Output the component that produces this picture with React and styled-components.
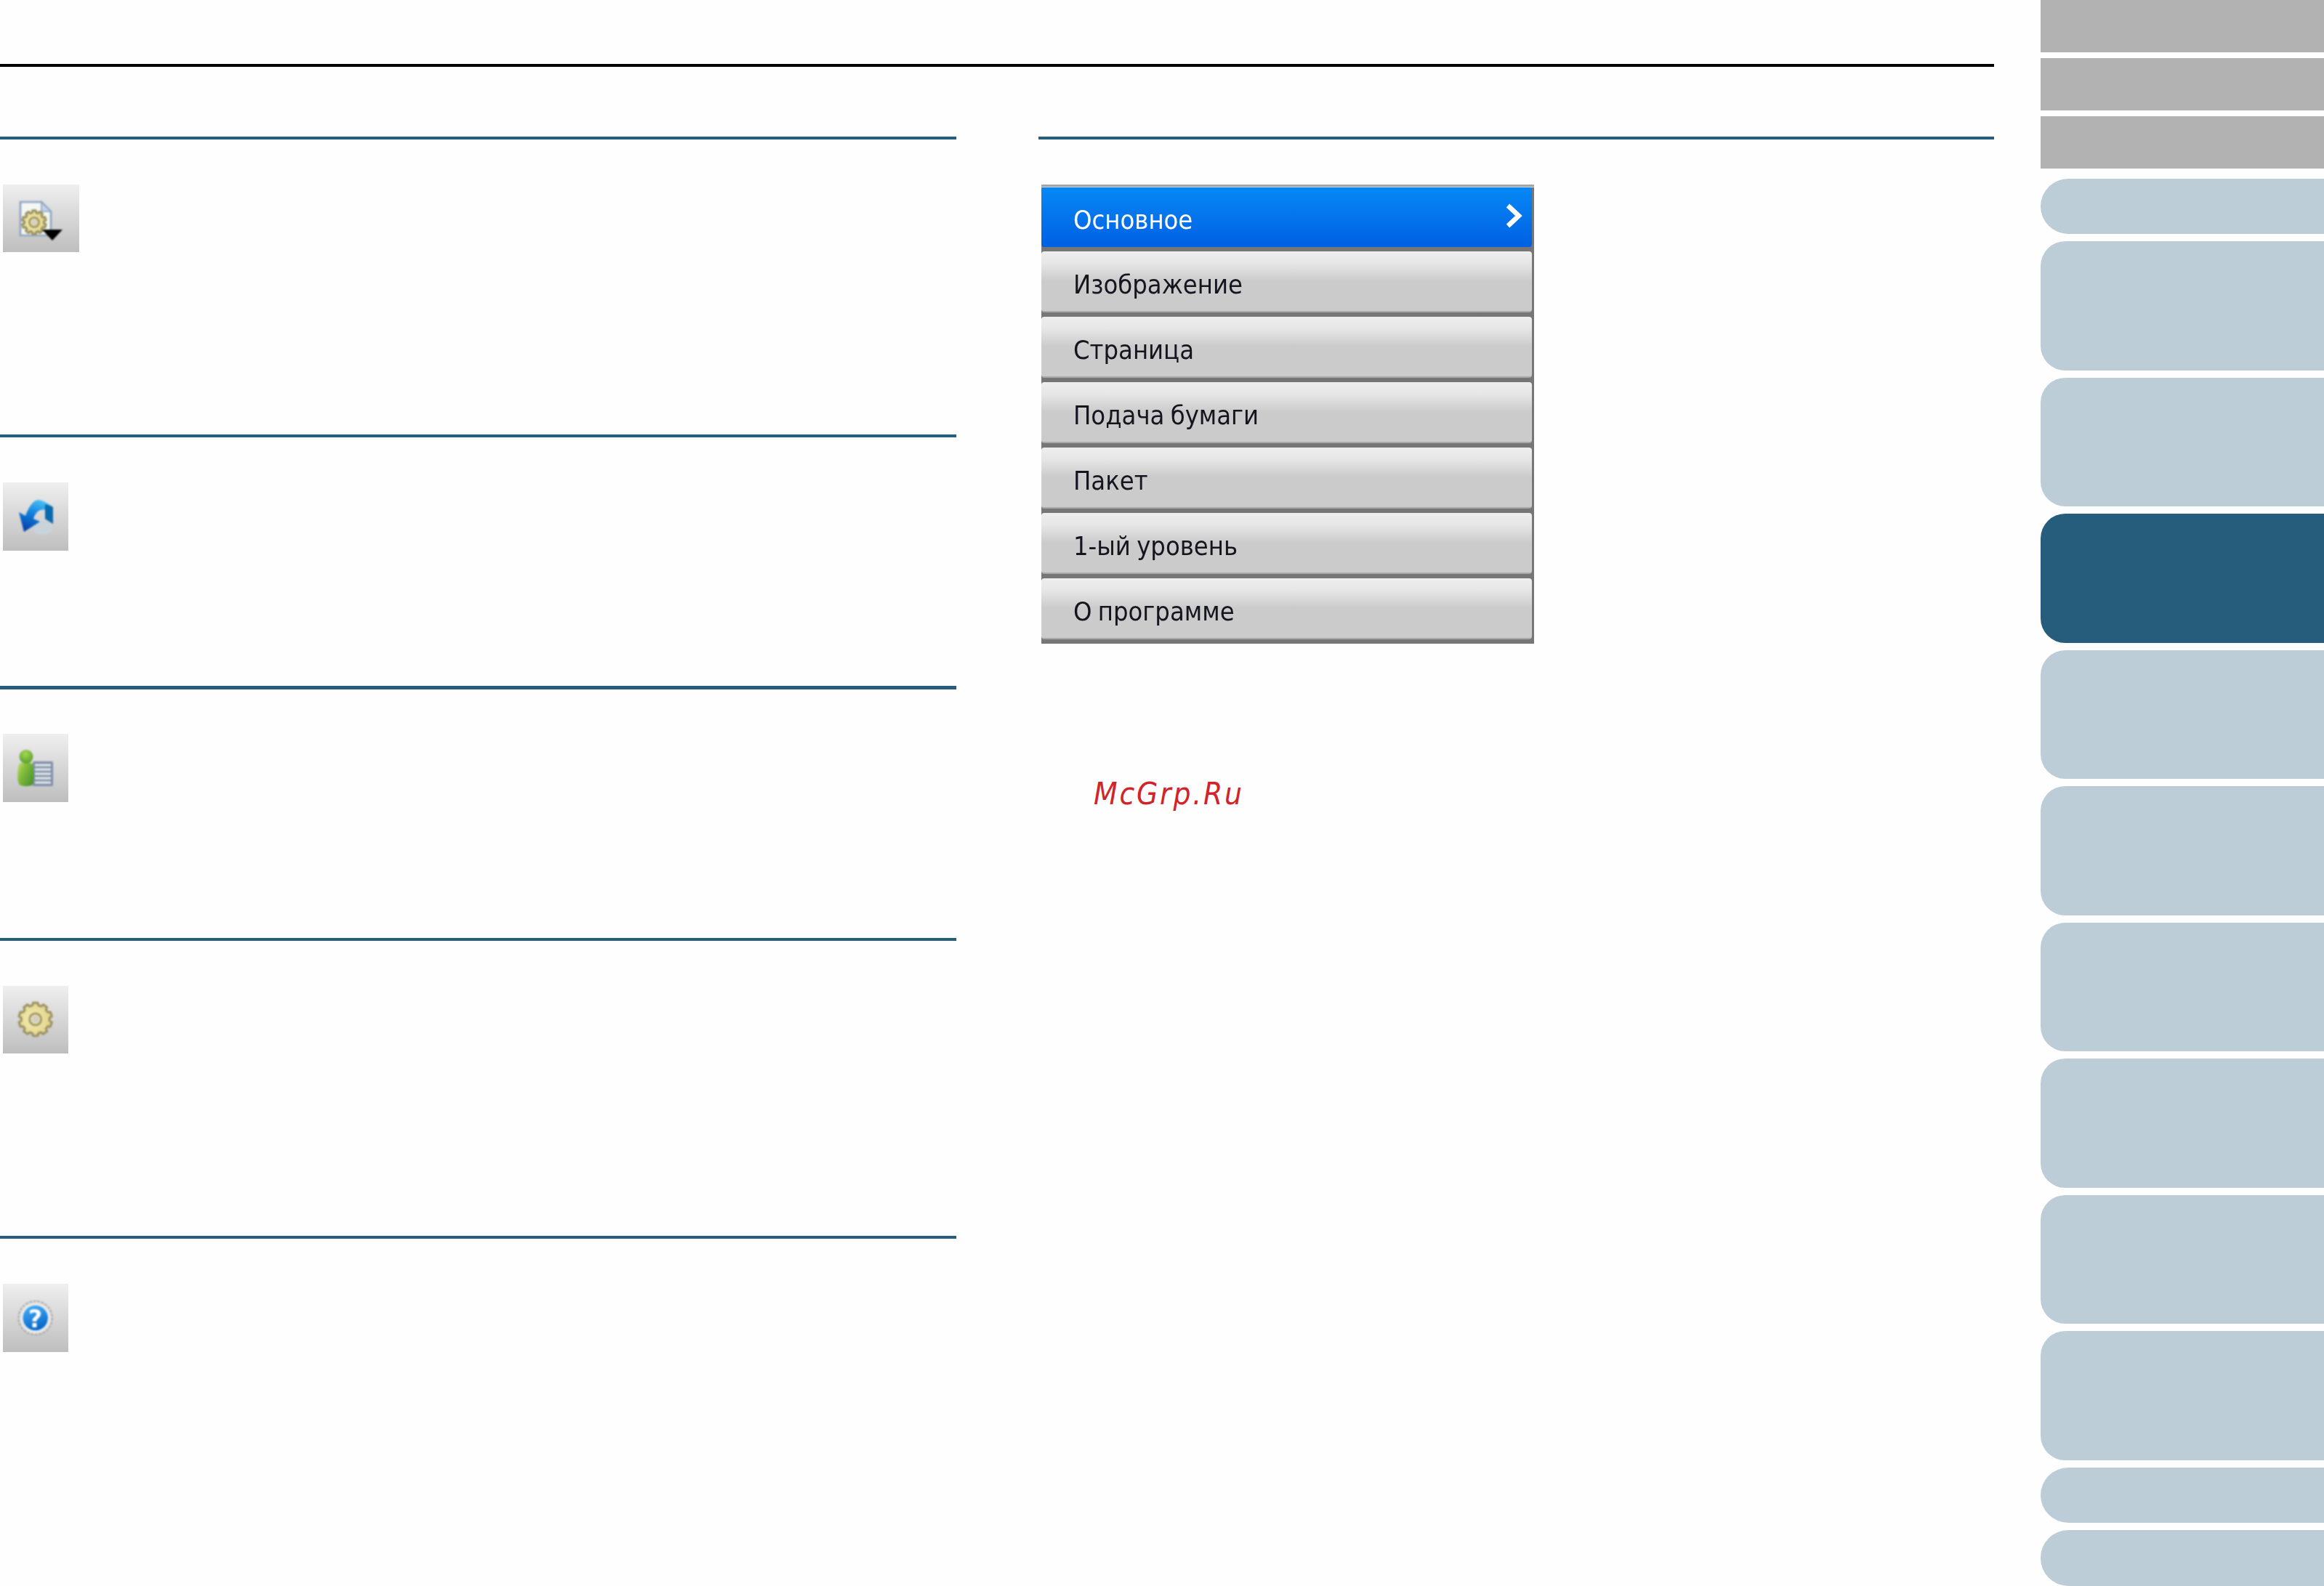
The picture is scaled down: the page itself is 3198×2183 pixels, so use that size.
import React from "react";
import styled, { createGlobalStyle } from "styled-components";

const Global = createGlobalStyle`
  html, body { margin: 0; padding: 0; background: #fefefe; }
  body { font-family: "DejaVu Sans", sans-serif; overflow: hidden; }
`;

const Page = styled.div`
  display: flex;
  width: 3198px;
  height: 2183px;
  overflow: hidden;
  background: #fefefe;
`;
const Main = styled.main`
  width: 2744px;
  flex: none;
  padding-top: 88px;
`;
const TopRule = styled.div`
  height: 4px;
  background: #000;
`;
const Columns = styled.div`
  display: grid;
  grid-template-columns: 1316px 1315px;
  column-gap: 113px;
  margin-top: 96px;
`;
const Section = styled.section`
  height: ${p => p.$h}px;
  box-sizing: border-box;
  border-top: ${p => p.$rule || 4}px solid #265c7c;
  padding: ${p => p.$pad || 62}px 0 0 4px;
`;
const RightSection = styled.section`
  border-top: 4px solid #265c7c;
  padding: 62px 0 0 4px;
`;
const ToolButton = styled.div`
  width: ${p => p.$w}px;
  height: ${p => p.$bh || 94}px;
  background: linear-gradient(#efefef, #bebebe);
  display: flex;
`;
const Glyph = styled.svg`
  width: 100%;
  height: 100%;
  filter: blur(0.9px);
`;
const Menu = styled.div`
  width: 678px;
  display: flex;
  flex-direction: column;
  background: linear-gradient(#a5a5a5 0 3px, #c9d6e4 3px 5px, transparent 5px);
  padding-top: 4px;
`;
const MenuRow = styled.div`
  height: ${p => (p.$first ? 88 : 90)}px;
  box-sizing: border-box;
  background: #767676;
  padding: 0 3px 6px 0;
  display: flex;
`;
const RowFace = styled.div`
  flex: 1;
  display: flex;
  align-items: center;
  justify-content: space-between;
  box-sizing: border-box;
  padding: 0 10px 0 44px;
  border-radius: 4px;
  border-bottom: ${p => (p.$active ? "0" : "2px solid #a9a9a9")};
  background: ${p =>
    p.$active
      ? "linear-gradient(#0788f5, #0060e2)"
      : "linear-gradient(#eeeeee 0, #e6e6e6 20%, #cbcbcb 50%, #cbcbcb 100%)"};
`;
const RowLabel = styled.span`
  font-family: "DejaVu Sans Condensed", "DejaVu Sans", sans-serif;
  font-stretch: condensed;
  font-size: 36px;
  word-spacing: -2px;
  line-height: 1;
  padding-top: ${p => (p.$active ? 8 : 10)}px;
  color: ${p => (p.$active ? "#fff" : "#15151f")};
  filter: blur(0.6px);
`;
const Chevron = styled.svg`
  width: 30px;
  height: 38px;
  margin-top: -4px;
  filter: blur(0.5px);
`;
const Watermark = styled.div`
  margin: 185px 0 0 72px;
  font-family: "DejaVu Sans Condensed", "DejaVu Sans", sans-serif;
  font-stretch: condensed;
  font-style: italic;
  font-size: 42px;
  line-height: 44px;
  letter-spacing: 2.8px;
  color: #d2222a;
`;
const Nav = styled.nav`
  margin-left: 64px;
  width: 390px;
  flex: none;
  display: flex;
  flex-direction: column;
`;
const GreyGroup = styled.div`
  display: flex;
  flex-direction: column;
  gap: 8px;
  margin-bottom: 13.5px;
`;
const GreyBlock = styled.div`
  height: 72px;
  background: #b2b2b2;
`;
const TabGroup = styled.div`
  display: flex;
  flex-direction: column;
  gap: 10px;
`;
const Tab = styled.div`
  height: ${p => (p.$small ? 76.5 : 177.5)}px;
  border-radius: ${p => (p.$small ? 38 : 34)}px 0 0 ${p => (p.$small ? 38 : 34)}px;
  background: ${p => (p.$active ? "#265c7c" : "#bdcdd8")};
`;

function gearPath(cx, cy, outer, inner, teeth) {
  const pts = [];
  const step = (Math.PI * 2) / teeth;
  for (let i = 0; i < teeth; i++) {
    const a = i * step - Math.PI / 2;
    const p = (r, t) => `${(cx + r * Math.cos(t)).toFixed(2)} ${(cy + r * Math.sin(t)).toFixed(2)}`;
    pts.push(p(inner, a - step * 0.34), p(outer, a - step * 0.22), p(outer, a + step * 0.22), p(inner, a + step * 0.34));
  }
  return "M" + pts.join("L") + "Z";
}

const Gear = ({ cx, cy, outer, inner, hole, ring, id }) => (
  <g>
    <defs>
      <radialGradient id={id} cx="0.42" cy="0.5" r="0.6">
        <stop offset="0" stopColor="#f6efb6" />
        <stop offset="1" stopColor="#dfd184" />
      </radialGradient>
    </defs>
    <path d={gearPath(cx, cy, outer, inner, 10)} fill={`url(#${id})`} stroke="#9b9162" strokeWidth="3" strokeLinejoin="round" />
    <circle cx={cx} cy={cy} r={ring} fill="none" stroke="#a49a68" strokeWidth="3" />
    <circle cx={cx} cy={cy} r={hole} fill="#cfcfcc" />
  </g>
);

const DocGearIcon = () => (
  <Glyph viewBox="0 0 105 93">
    <path d="M24 24H53L66 37V70H24Z" fill="#f4f7f2" stroke="#8ea2c2" strokeWidth="2.6" />
    <path d="M53 24L66 37H53Z" fill="#c3d2e8" stroke="#8ea2c2" strokeWidth="1.6" />
    <Gear id="g1" cx={43} cy={52} outer={16.5} inner={13.5} hole={3.5} ring={6.5} />
    <path d="M54 62H82L68 77Z" fill="#000" />
  </Glyph>
);

const ReturnIcon = () => (
  <Glyph viewBox="0 0 90 94">
    <defs>
      <linearGradient id="ra" x1="0.6" y1="0" x2="0.25" y2="1">
        <stop offset="0" stopColor="#4cc0f4" />
        <stop offset="0.45" stopColor="#0f7fdc" />
        <stop offset="1" stopColor="#063fa6" />
      </linearGradient>
    </defs>
    <ellipse cx="55" cy="63" rx="13" ry="9" fill="#c9d3da" />
    <path d="M22 41L31 46C36 33 42 24 49 24C56 25 62 29 69 34V57L58 50V38C52 36 45 40 42 50L51 54L29 68Z" fill="url(#ra)" />
    <path d="M58 30C62 31 66 32 69 34V57L58 50Z" fill="#0b6aae" />
  </Glyph>
);

const PersonListIcon = () => (
  <Glyph viewBox="0 0 90 94">
    <defs>
      <linearGradient id="pb" x1="0" y1="0" x2="1" y2="0.7">
        <stop offset="0" stopColor="#c6df6a" />
        <stop offset="0.4" stopColor="#85bd3c" />
        <stop offset="1" stopColor="#4c972e" />
      </linearGradient>
      <radialGradient id="ph" cx="0.45" cy="0.3" r="0.7">
        <stop offset="0" stopColor="#a7d654" />
        <stop offset="1" stopColor="#559f2e" />
      </radialGradient>
    </defs>
    <rect x="41" y="38" width="28" height="34" rx="1.5" fill="#7f8eac" />
    {[41.5, 47.5, 53.5, 59.5, 65.5].map(y => (
      <rect key={y} x="44" y={y} width="22" height="3.2" fill="#e3e9e6" />
    ))}
    <path d="M22 42C26 39 38 39 41 42C43 50 43 64 41 70C38 73 24 73 22 69C19 62 20 50 22 42Z" fill="url(#pb)" />
    <circle cx="32" cy="31.5" r="9.5" fill="url(#ph)" />
  </Glyph>
);

const SettingsIcon = () => (
  <Glyph viewBox="0 0 90 93">
    <Gear id="g2" cx={44.7} cy={46} outer={23} inner={19.5} hole={5} ring={8} />
  </Glyph>
);

const HelpIcon = () => (
  <Glyph viewBox="0 0 90 94">
    <defs>
      <linearGradient id="hb" x1="0.3" y1="0" x2="0.6" y2="1">
        <stop offset="0" stopColor="#49aef5" />
        <stop offset="1" stopColor="#0062c4" />
      </linearGradient>
    </defs>
    <circle cx="44.7" cy="47" r="23" fill="#e3e3e3" stroke="#a5a5a5" strokeWidth="2" strokeDasharray="4 1.5" />
    <circle cx="44.7" cy="47" r="18" fill="url(#hb)" stroke="#f4f8fb" strokeWidth="1.5" />
    <text x="44.7" y="60" textAnchor="middle" fontFamily="DejaVu Sans" fontWeight="700" fontSize="33" fill="#fff">?</text>
  </Glyph>
);

const sections = [
  { h: 410, w: 105, bh: 93, icon: <DocGearIcon /> },
  { h: 346, w: 90, icon: <ReturnIcon /> },
  { h: 347, w: 90, icon: <PersonListIcon />, rule: 5, pad: 61 },
  { h: 410, w: 90, bh: 93, icon: <SettingsIcon /> },
  { h: 478, w: 90, icon: <HelpIcon /> },
];

const menuItems = ["Основное", "Изображение", "Страница", "Подача бумаги", "Пакет", "1-ый уровень", "О программе"];
const largeTabs = [0, 1, 2, 3, 4, 5, 6, 7, 8];

export default function App() {
  return (
    <Page>
      <Global />
      <Main>
        <TopRule />
        <Columns>
          <div>
            {sections.map((s, i) => (
              <Section key={i} $h={s.h} $rule={s.rule} $pad={s.pad}>
                <ToolButton $w={s.w} $bh={s.bh}>{s.icon}</ToolButton>
              </Section>
            ))}
          </div>
          <RightSection>
            <Menu>
              {menuItems.map((label, i) => (
                <MenuRow key={label} $first={i === 0}>
                  <RowFace $active={i === 0}>
                    <RowLabel $active={i === 0}>{label}</RowLabel>
                    {i === 0 && (
                      <Chevron viewBox="0 0 30 38">
                        <path d="M7 5L22 19L7 33" fill="none" stroke="#fff" strokeWidth="6.5" />
                      </Chevron>
                    )}
                  </RowFace>
                </MenuRow>
              ))}
            </Menu>
            <Watermark>McGrp.Ru</Watermark>
          </RightSection>
        </Columns>
      </Main>
      <Nav>
        <GreyGroup>
          <GreyBlock />
          <GreyBlock />
          <GreyBlock />
        </GreyGroup>
        <TabGroup>
          <Tab $small />
          {largeTabs.map(i => (
            <Tab key={i} $active={i === 2} />
          ))}
          <Tab $small />
          <Tab $small />
        </TabGroup>
      </Nav>
    </Page>
  );
}
